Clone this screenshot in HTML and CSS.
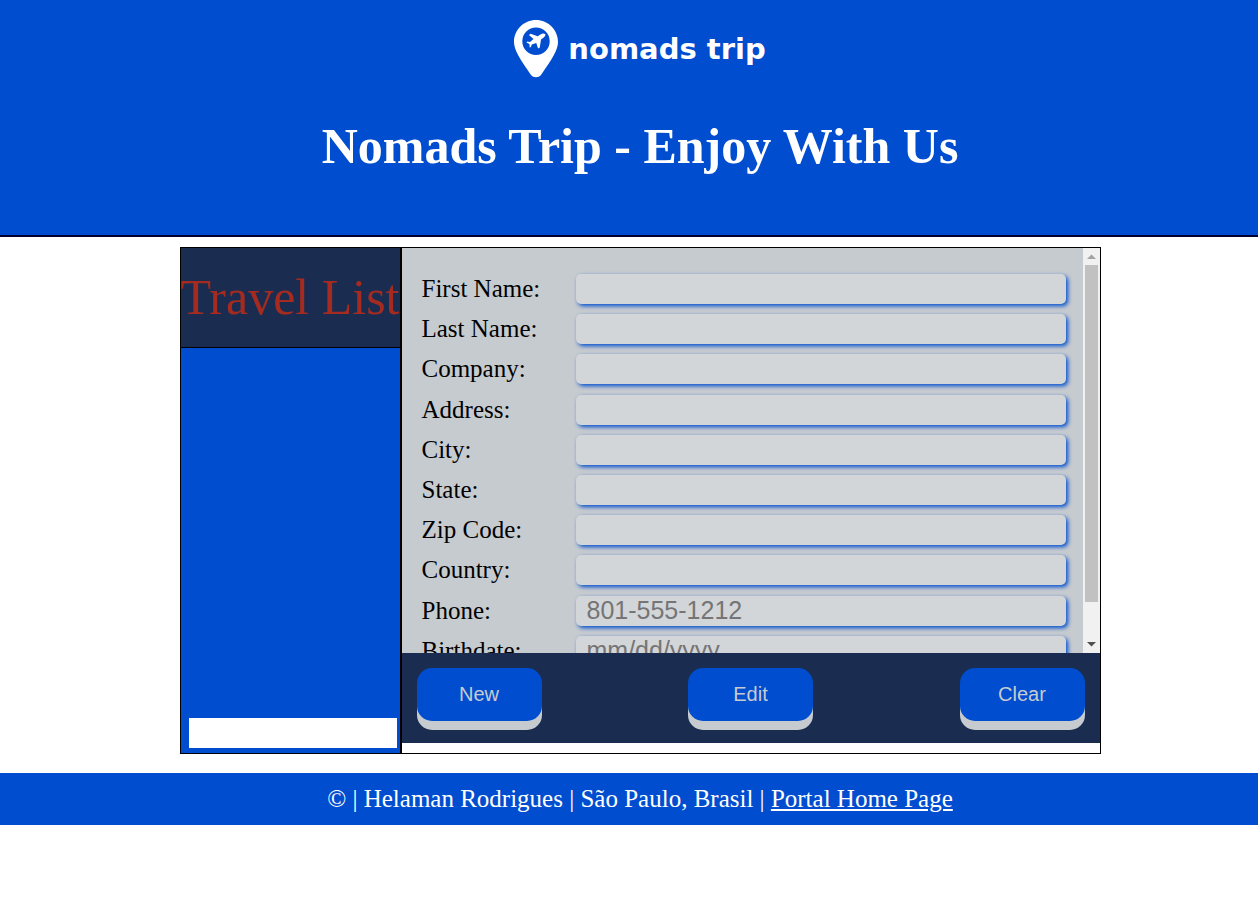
FILE: index.html
```html
<!DOCTYPE html>
<html lang="en">
<head>
<meta charset="utf-8">
<meta name="viewport" content="width=device-width, initial-scale=1">
<title>Nomads Trip - Enjoy With Us</title>
<link rel="stylesheet" href="styles.css">
</head>
<body>
<header class="site-header">
  <div class="brand">
    <svg class="brand-pin" viewBox="0 0 44 58" aria-hidden="true">
      <path fill="#fff" fill-rule="evenodd" d="M22 0C9.800 0 0 9.800 0 22c0 8 6 17 17 33 2.500 3 7.500 3 10 0C38 39 44 30 44 22 44 9.800 34.200 0 22 0Zm0 7.500a13.700 13.700 0 1 1 0 27.400 13.700 13.700 0 0 1 0-27.400Z"/>
      <path fill="#fff" d="M31.200 14.200c-1-1-3.200-.7-4.700.3l-2.900 1.800-7-2.500-1.700 1.200 4.600 4-3.500 3-2.500-.4-1.100.9 3 1.500.3 3.500 1.200-.6.900-2.300 4.500-1.600 1.800 5.500 1.700-1 1.200-7.900 2.700-2.200c1.500-1.200 2.200-2.600 1.500-3.200Z"/>
    </svg>
    <span class="brand-name">nomads trip</span>
  </div>
  <h1 class="page-title">Nomads Trip - Enjoy With Us</h1>
</header>
<main class="main">
  <section class="portal">
    <aside class="sidebar">
      <h2 class="sidebar-title">Travel List</h2>
      <div class="travel-list"></div>
      <div class="search"><input class="search-input" type="text" aria-label="Search travel list"></div>
    </aside>
    <div class="content">
      <div class="viewport">
        <form class="fields">
          <label for="first">First Name:</label><input id="first" type="text">
          <label for="last">Last Name:</label><input id="last" type="text">
          <label for="company">Company:</label><input id="company" type="text">
          <label for="address">Address:</label><input id="address" type="text">
          <label for="city">City:</label><input id="city" type="text">
          <label for="state">State:</label><input id="state" type="text">
          <label for="zip">Zip Code:</label><input id="zip" type="text">
          <label for="country">Country:</label><input id="country" type="text">
          <label for="phone">Phone:</label><input id="phone" type="tel" placeholder="801-555-1212">
          <label for="birth">Birthdate:</label><input id="birth" type="text" placeholder="mm/dd/yyyy">
        </form>
        <div class="scrollbar" aria-hidden="true">
          <svg class="arrow" viewBox="0 0 17 17"><path fill="#a3a3a3" d="M4 11h9L8.500 6.500Z"/></svg>
          <div class="thumb"></div>
          <svg class="arrow" viewBox="0 0 17 17"><path fill="#505050" d="M4 6h9l-4.500 4.500Z"/></svg>
        </div>
      </div>
      <div class="actions">
        <button class="action" type="button">New</button>
        <button class="action" type="button">Edit</button>
        <button class="action" type="button">Clear</button>
      </div>
    </div>
  </section>
</main>
<footer class="site-footer">© | Helaman Rodrigues | São Paulo, Brasil | <a href="#">Portal Home Page</a></footer>
</body>
</html>
```
FILE: styles.css
```css
* {
  box-sizing: border-box;
}

body {
  margin: 0;
  background: #fff;
  font-family: "Liberation Serif", "Times New Roman", serif;
  font-size: 25px;
  color: #000;
}

.site-header,
.main,
.site-footer {
  padding-left: 22px;
}

.site-header {
  display: flex;
  flex-direction: column;
  align-items: center;
  gap: 40px;
  padding-top: 20px;
  padding-bottom: 60px;
  border-bottom: 2px solid #00002e;
  background: #004dcf;
  color: #fff;
}

.brand {
  display: flex;
  align-items: center;
  gap: 10px;
}

.brand-pin {
  width: 44px;
  height: 58px;
}

.brand-name {
  font: 700 29px/40px "DejaVu Sans", sans-serif;
}

.page-title {
  margin: 0;
  font-size: 50px;
  line-height: 57px;
}

.main {
  display: flex;
  justify-content: center;
  padding-top: 10px;
  padding-bottom: 19px;
}

.portal {
  display: flex;
  width: 100%;
  max-width: 921px;
  border: 1px solid #000;
}

.sidebar {
  display: flex;
  flex-direction: column;
  flex: none;
  width: 221px;
  border-right: 2px solid #000;
  background: #004dcf;
}

.sidebar-title {
  margin: 0;
  border-bottom: 1px solid #000;
  background: #1a2d50;
  color: #a52a20;
  font-size: 50px;
  font-weight: 400;
  line-height: 99px;
  text-align: center;
  white-space: nowrap;
}

.travel-list {
  flex: 1;
}

.search {
  padding: 0 3px 5px 8px;
}

.search-input {
  display: block;
  width: 100%;
  height: 30px;
  border: 0;
  padding: 0 8px;
  background: #fff;
  font: 20px "Liberation Sans", Arial, sans-serif;
}

.content {
  flex: 1;
  min-width: 0;
  padding-bottom: 10px;
}

.viewport {
  display: flex;
  height: 405px;
  overflow: hidden;
  background: #c6cbcf;
}

.fields {
  display: grid;
  flex: 1;
  grid-template-columns: 154px 1fr;
  grid-template-rows: repeat(10, 1fr);
  align-items: center;
  height: 402px;
  margin: 21px 17px 0 20px;
}

.fields input {
  width: 100%;
  height: 30px;
  border: 0;
  border-radius: 5px;
  padding: 0 11px;
  background: #d3d6d9;
  box-shadow: 2px 2px 4px #004dcf;
  font: 25px "Liberation Sans", Arial, sans-serif;
}

.fields input::placeholder {
  color: #757575;
}

.scrollbar {
  display: flex;
  flex-direction: column;
  width: 17px;
  background: #f1f1f1;
}

.arrow {
  width: 17px;
  height: 17px;
}

.thumb {
  height: 337px;
  margin: 0 2px auto;
  background: #c1c1c1;
}

.actions {
  display: flex;
  justify-content: space-between;
  padding: 15px 15px 22px;
  background: #1a2d50;
}

.action {
  width: 125px;
  height: 53px;
  border: 0;
  border-radius: 15px;
  background: #004dcf;
  box-shadow: 0 9px #c6cbcf;
  color: #c6cbcf;
  font: 20px "Liberation Sans", Arial, sans-serif;
}

.site-footer {
  background: #004dcf;
  color: #fff;
  line-height: 52px;
  text-align: center;
}

.site-footer a {
  color: inherit;
}
```
